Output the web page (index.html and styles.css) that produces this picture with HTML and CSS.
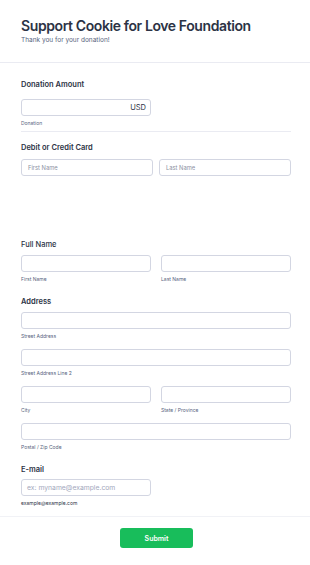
FILE: index.html
```html
<!DOCTYPE html>
<html>
<head>
<meta charset="utf-8">
<link rel="stylesheet" href="styles.css">
</head>
<body>
<div class="page">
  <header class="head">
    <h1 class="title">Support Cookie for Love Foundation</h1>
    <p class="subtitle">Thank you for your donation!</p>
  </header>
  <main class="form">
    <section class="field donation">
      <div class="label">Donation Amount</div>
      <div class="input half usd"><span class="currency">USD</span></div>
      <div class="sub">Donation</div>
    </section>
    <div class="inner-line"></div>
    <section class="field card">
      <div class="label">Debit or Credit Card</div>
      <div class="row tight">
        <div class="input ph">First Name</div>
        <div class="input ph">Last Name</div>
      </div>
    </section>
    <div class="spacer"></div>
    <section class="field">
      <div class="label light">Full Name</div>
      <div class="row">
        <div class="col"><div class="input"></div><div class="sub">First Name</div></div>
        <div class="col"><div class="input"></div><div class="sub">Last Name</div></div>
      </div>
    </section>
    <section class="field">
      <div class="label">Address</div>
      <div class="input"></div>
      <div class="sub">Street Address</div>
      <div class="input"></div>
      <div class="sub">Street Address Line 2</div>
      <div class="row">
        <div class="col"><div class="input"></div><div class="sub">City</div></div>
        <div class="col"><div class="input"></div><div class="sub">State / Province</div></div>
      </div>
      <div class="input"></div>
      <div class="sub">Postal / Zip Code</div>
    </section>
    <section class="field email-field">
      <div class="label">E-mail</div>
      <div class="input half email">ex: myname@example.com</div>
      <div class="sub dark">example@example.com</div>
    </section>
  </main>
  <footer class="foot">
    <button class="submit">Submit</button>
  </footer>
</div>
</body>
</html>
```
FILE: styles.css
```css
* { box-sizing: border-box; }
html, body { margin: 0; padding: 0; background: #fff; }
body { font-family: Inter, "Noto Sans", sans-serif; color: #2c3345; }
.page { width: 310px; }
.head { padding: 16px 21px 17px; border-bottom: 1px solid #eaebf2; }
.title { margin: 0; font-size: 14px; font-weight: 600; line-height: 19px; letter-spacing: -0.4px; color: #2c3345; white-space: nowrap; }
.subtitle { margin: 1px 0 0; font-size: 6.5px; line-height: 9px; color: #57647e; }
.form { padding: 17px 19px 0 21px; }
.field { display: flow-root; margin-bottom: 5px; }
.label { font-size: 7.5px; font-weight: 600; line-height: 10px; margin-bottom: 5px; color: #2c3345; }
.donation .label { margin-bottom: 9px; }
.card .label { margin-bottom: 6px; }
.label.light { font-weight: 500; }
.input { height: 17px; border: 1px solid #d3d6e2; border-radius: 3px; background: #fff; font-size: 5.8px; color: #8c91a3; display: flex; align-items: center; padding: 0 6px; }
.half { width: 130px; }
.usd { justify-content: flex-end; padding-right: 4px; }
.currency { font-size: 7.5px; color: #2c3345; }
.email { font-size: 6.8px; color: #a3a8bd; padding-left: 5px; }
.sub { font-size: 5px; line-height: 7px; color: #57647e; margin-top: 4px; margin-bottom: 9px; }
.sub.dark { color: #2c3345; }
.donation .sub { margin-bottom: 0; }
.inner-line { height: 1px; background: #eaebf2; margin: 4px 0 11px; }
.row { display: flex; gap: 10px; }
.row.tight { gap: 6px; }
.row > * { flex: 1; }
.spacer { height: 64px; }
.field.donation { margin-bottom: 0; }
.card { margin-bottom: 0; }
.email-field { margin-bottom: 0; }
.email-field .label { margin-bottom: 4px; }
.email-field .sub { margin-bottom: 9px; }
.foot { border-top: 1px solid #f1f2f6; display: flex; justify-content: center; padding: 11px 0 20px 3px; }
.submit { width: 73px; height: 20px; border: none; border-radius: 3px; background: #18bd5b; color: #fff; font-family: Inter, sans-serif; font-weight: 600; font-size: 7px; }
```
